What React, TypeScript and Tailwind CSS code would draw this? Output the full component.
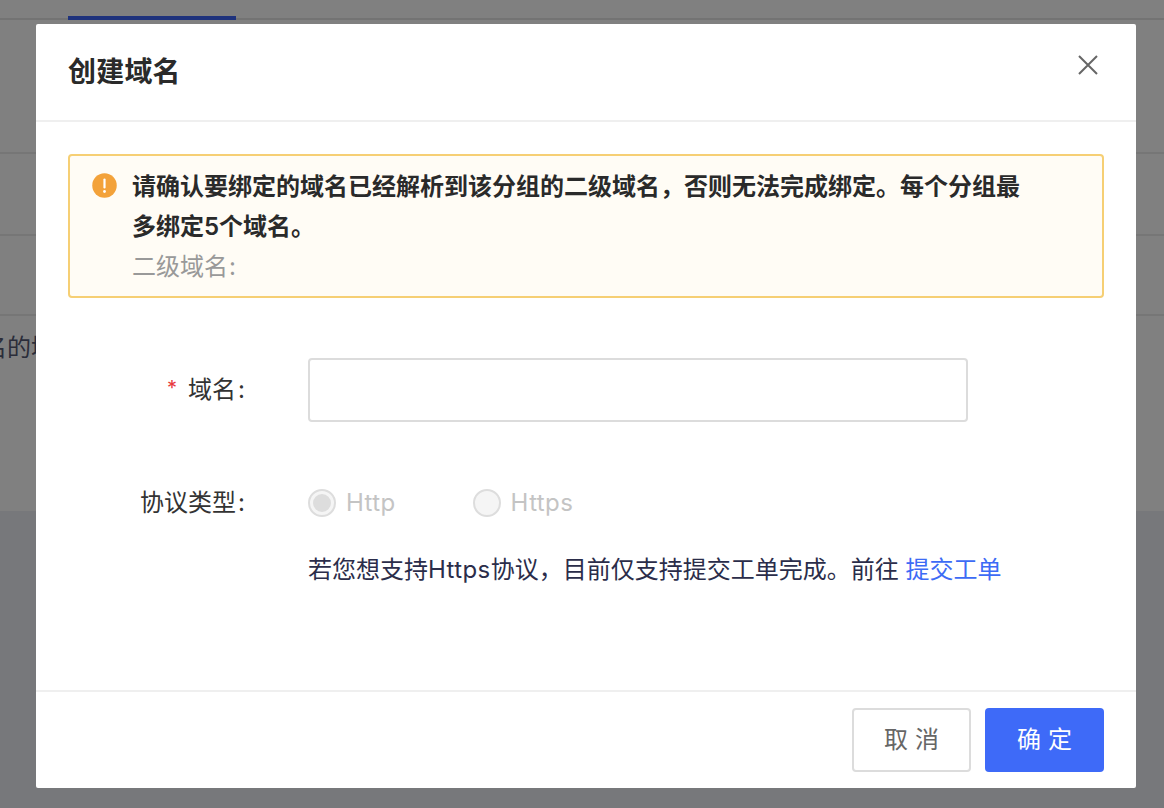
import React from "react";

const font = 'Inter, "Noto Sans CJK SC", sans-serif';

export default function App() {
  return (
    <div
      className="relative w-[1164px] h-[808px] overflow-hidden bg-[#77787b]"
      style={{ fontFamily: font }}
    >
      {/* Dimmed page behind the dialog */}
      <div className="flex flex-col h-[511px] bg-[#808080]">
        <div className="h-[20px] border-b-2 border-[#737373] pl-[68px] shrink-0">
          <div className="w-[168px] h-[20px] border-b-4 border-[#1e327c] -mb-[2px]" />
        </div>
        <div className="h-[134px] border-b-2 border-[#767676] shrink-0" />
        <div className="h-[82px] border-b-2 border-[#767676] shrink-0" />
        <div className="h-[80px] border-b-2 border-[#767676] shrink-0" />
        <div className="flex-1 pt-[14px] text-[24px] leading-[36px] text-[#2b2d3a] whitespace-nowrap -ml-[17px]">
          名的域
        </div>
      </div>

      {/* Dialog */}
      <div className="absolute left-[36px] top-[24px] w-[1100px] h-[764px] bg-white rounded-[2px] flex flex-col">
        <div className="h-[98px] shrink-0 border-b-2 border-[#efefef] pl-[32px] pr-[36px] flex items-center justify-between">
          <div className="text-[28px] leading-[40px] font-semibold text-[#2a2a2a] tracking-[0.2px]">创建域名</div>
          <svg width="24" height="24" viewBox="0 0 24 24" className="-mt-[14px] text-[#666666]" fill="none" stroke="currentColor" strokeWidth="2">
            <path d="M3 3 L21 21 M21 3 L3 21" />
          </svg>
        </div>

        <div className="flex-1 px-[32px] pt-[32px] flex flex-col">
          <div className="h-[144px] border-2 border-[#f6cf74] bg-[#fffcf5] rounded-[4px] flex pl-[22px] pt-[11px]">
            <svg width="25" height="25" viewBox="0 0 25 25" className="shrink-0 mt-[6px]">
              <circle cx="12.5" cy="12.5" r="12.25" fill="#f3a23a" />
              <rect x="11.4" y="5.5" width="2.2" height="10" rx="1.1" fill="#fff" />
              <circle cx="12.5" cy="18.5" r="1.4" fill="#fff" />
            </svg>
            <div className="ml-[15px] w-[900px] text-[24px] leading-[40px]">
              <div className="font-semibold text-[#2a2a2a]">
                请确认要绑定的域名已经解析到该分组的二级域名，否则无法完成绑定。每个分组最多绑定5个域名。
              </div>
              <div className="text-[#999999]">
                二级域名<span className="ml-[1px]">:</span>
              </div>
            </div>
          </div>

          <div className="flex mt-[60px] h-[64px] items-center">
            <div className="w-[177px] text-right text-[24px] text-[#333333]">
              <span className="inline-block -translate-y-[3px] text-[#e8383d] mr-[11px] text-[20px]">*</span>域名<span className="ml-[2px]">:</span>
            </div>
            <div className="ml-[63px] w-[660px] h-[64px] border-2 border-[#dcdcdc] rounded-[4px] bg-white" />
          </div>

          <div className="flex mt-[47px] h-[68px] items-center">
            <div className="w-[177px] text-right text-[24px] text-[#333333]">
              协议类型<span className="ml-[2px]">:</span>
            </div>
            <div className="ml-[63px] flex items-center text-[24px] text-[#c4c4c4] tracking-[0.4px]">
              <span className="w-[28px] h-[28px] rounded-full border-2 border-[#dddddd] bg-[#f5f5f5] flex items-center justify-center">
                <span className="w-[18px] h-[18px] rounded-full bg-[#dddddd]" />
              </span>
              <span className="ml-[10px]">Http</span>
              <span className="ml-[77px] w-[28px] h-[28px] rounded-full border-2 border-[#dddddd] bg-[#f5f5f5]" />
              <span className="ml-[10px]">Https</span>
            </div>
          </div>

          <div className="ml-[240px] mt-[15px] text-[24px] leading-[36px] text-[#2b2d4a] whitespace-nowrap">
            若您想支持<span className="tracking-[0.4px]">Https</span>协议，目前仅支持提交工单完成。前往 <span className="text-[#3d6bf5]">提交工单</span>
          </div>
        </div>

        <div className="h-[98px] shrink-0 border-t-2 border-[#efefef] pr-[32px] flex items-center justify-end gap-[14px]">
          <button className="w-[119px] h-[64px] pl-[7px] border-2 border-[#dcdcdc] rounded-[4px] bg-white text-[24px] tracking-[7px] text-[#666666]">
            取消
          </button>
          <button className="w-[119px] h-[64px] pl-[7px] rounded-[4px] bg-[#3e6af8] text-[24px] tracking-[7px] text-white">
            确定
          </button>
        </div>
      </div>
    </div>
  );
}
